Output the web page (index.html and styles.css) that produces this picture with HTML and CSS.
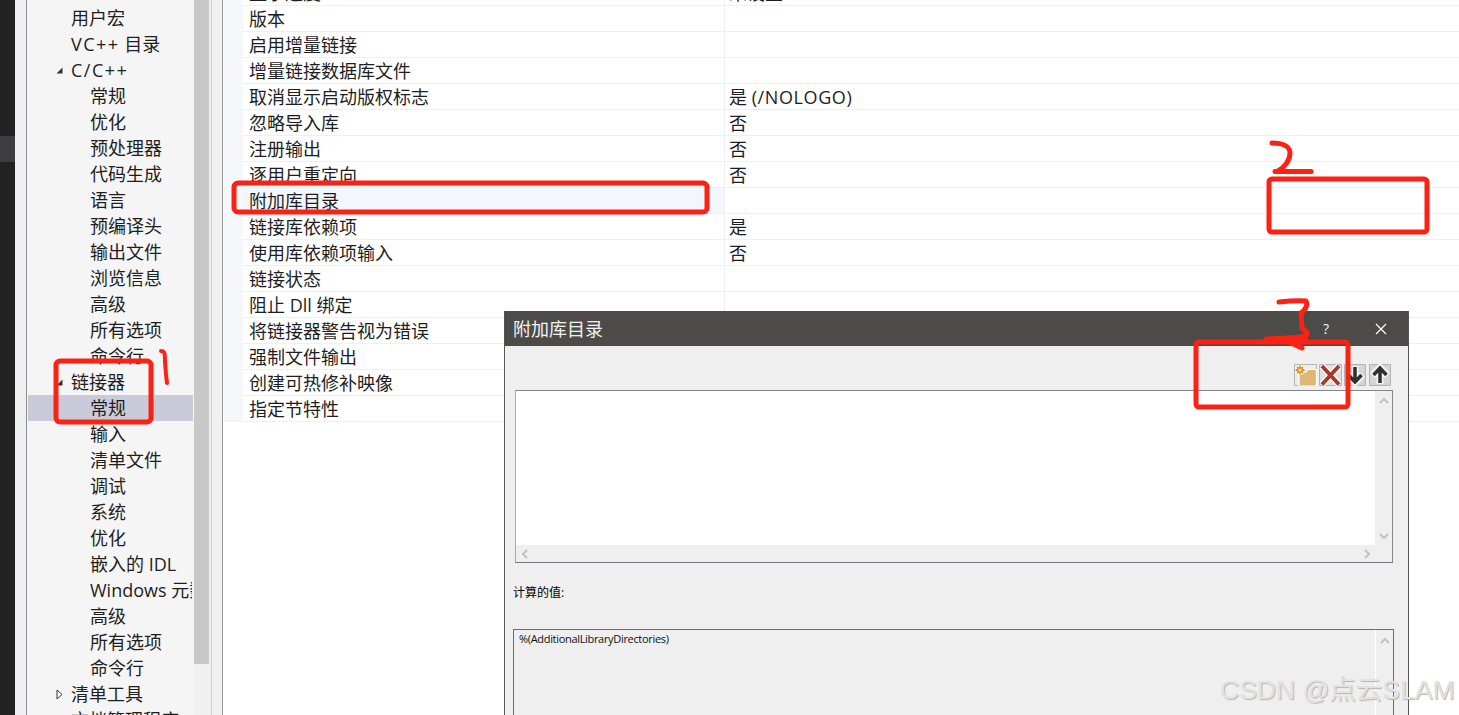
FILE: index.html
```html
<!DOCTYPE html>
<html lang="zh-CN">
<head>
<meta charset="utf-8">
<title>附加库目录</title>
<link rel="stylesheet" href="styles.css">
</head>
<body>
<div class="screen">
  <div class="ide-strip"><div class="ide-strip-active"></div></div>

  <div class="sidebar">
    <nav class="tree">
      <div class="node lvl1"><span class="twist"></span><span class="label">用户宏</span></div>
      <div class="node lvl1"><span class="twist"></span><span class="label"><span class="wide">VC++</span> 目录</span></div>
      <div class="node lvl1"><span class="twist"><svg viewBox="0 0 7 7" width="7" height="7"><path d="M6.5 0.5V6.5H0.5Z" fill="#333"/></svg></span><span class="label wide">C/C++</span></div>
      <div class="node lvl2"><span class="label">常规</span></div>
      <div class="node lvl2"><span class="label">优化</span></div>
      <div class="node lvl2"><span class="label">预处理器</span></div>
      <div class="node lvl2"><span class="label">代码生成</span></div>
      <div class="node lvl2"><span class="label">语言</span></div>
      <div class="node lvl2"><span class="label">预编译头</span></div>
      <div class="node lvl2"><span class="label">输出文件</span></div>
      <div class="node lvl2"><span class="label">浏览信息</span></div>
      <div class="node lvl2"><span class="label">高级</span></div>
      <div class="node lvl2"><span class="label">所有选项</span></div>
      <div class="node lvl2"><span class="label">命令行</span></div>
      <div class="node lvl1"><span class="twist"><svg viewBox="0 0 7 7" width="7" height="7"><path d="M6.5 0.5V6.5H0.5Z" fill="#333"/></svg></span><span class="label">链接器</span></div>
      <div class="node lvl2 selected"><span class="label">常规</span></div>
      <div class="node lvl2"><span class="label">输入</span></div>
      <div class="node lvl2"><span class="label">清单文件</span></div>
      <div class="node lvl2"><span class="label">调试</span></div>
      <div class="node lvl2"><span class="label">系统</span></div>
      <div class="node lvl2"><span class="label">优化</span></div>
      <div class="node lvl2"><span class="label">嵌入的 IDL</span></div>
      <div class="node lvl2"><span class="label">Windows 元数据</span></div>
      <div class="node lvl2"><span class="label">高级</span></div>
      <div class="node lvl2"><span class="label">所有选项</span></div>
      <div class="node lvl2"><span class="label">命令行</span></div>
      <div class="node lvl1"><span class="twist"><svg viewBox="0 0 7 11" width="7" height="11"><path d="M1 1L6 5.5L1 10Z" fill="#fff" stroke="#333" stroke-width="1"/></svg></span><span class="label">清单工具</span></div>
      <div class="node lvl1"><span class="twist"></span><span class="label">文档管理程序</span></div>
    </nav>
    <div class="tree-scroll"><div class="tree-thumb"></div></div>
    <div class="splitter"></div>
  </div>

  <main class="props">
    <div class="prop-list">
      <div class="prop"><div class="prop-name">显示进度</div><div class="prop-value">未设置</div></div>
      <div class="prop"><div class="prop-name">版本</div><div class="prop-value"></div></div>
      <div class="prop"><div class="prop-name">启用增量链接</div><div class="prop-value"></div></div>
      <div class="prop"><div class="prop-name">增量链接数据库文件</div><div class="prop-value"></div></div>
      <div class="prop"><div class="prop-name">取消显示启动版权标志</div><div class="prop-value">是 <span class="roomy">(/NOLOGO)</span></div></div>
      <div class="prop"><div class="prop-name">忽略导入库</div><div class="prop-value">否</div></div>
      <div class="prop"><div class="prop-name">注册输出</div><div class="prop-value">否</div></div>
      <div class="prop"><div class="prop-name">逐用户重定向</div><div class="prop-value">否</div></div>
      <div class="prop current"><div class="prop-name">附加库目录</div><div class="prop-value"></div></div>
      <div class="prop"><div class="prop-name">链接库依赖项</div><div class="prop-value">是</div></div>
      <div class="prop"><div class="prop-name">使用库依赖项输入</div><div class="prop-value">否</div></div>
      <div class="prop"><div class="prop-name">链接状态</div><div class="prop-value"></div></div>
      <div class="prop"><div class="prop-name">阻止 Dll 绑定</div><div class="prop-value"></div></div>
      <div class="prop"><div class="prop-name">将链接器警告视为错误</div><div class="prop-value"></div></div>
      <div class="prop"><div class="prop-name">强制文件输出</div><div class="prop-value"></div></div>
      <div class="prop"><div class="prop-name">创建可热修补映像</div><div class="prop-value"></div></div>
      <div class="prop"><div class="prop-name">指定节特性</div><div class="prop-value"></div></div>
    </div>
  </main>
</div>

<section class="dialog">
  <header class="dialog-title">
    <span class="dialog-name">附加库目录</span>
    <span class="dialog-help">?</span>
    <svg class="dialog-close" viewBox="0 0 12 12" width="12" height="12"><path d="M1 1L11 11M11 1L1 11" stroke="#fff" stroke-width="1.2" fill="none"/></svg>
  </header>
  <div class="dialog-body">
    <div class="toolbar">
      <span class="tool">
        <svg viewBox="0 0 23 22" width="23" height="22">
          <path d="M.5 .5H22.500V21.500H.5Z" fill="#ececec" stroke="#b4b4b4"/>
          <path d="M5 8H12L14 5.500H22.500V22H5Z" fill="#e0b673" stroke="#fff" stroke-width="1.200"/>
          <path d="M1 6H11M6 1V11M2.500 2.500L9.500 9.500M9.500 2.500L2.500 9.500" stroke="#fff" stroke-width="3.500"/>
          <path d="M1.500 6H10.500M6 1.500V10.500M3 3L9 9M9 3L3 9" stroke="#da8e22" stroke-width="1.800"/>
          <circle cx="6" cy="6" r="1.600" fill="#f9e0a0"/>
        </svg>
      </span>
      <span class="tool">
        <svg viewBox="0 0 23 22" width="23" height="22">
          <path d="M.5 .5H22.500V21.500H.5Z" fill="#e0e0e0" stroke="#b4b4b4"/>
          <path d="M3 2L20 20.500M20 2L3 20.500" stroke="#fff" stroke-width="6.500"/>
          <path d="M3 2L20 20.500M20 2L3 20.500" stroke="#a43b2c" stroke-width="4"/>
        </svg>
      </span>
      <span class="tool">
        <svg viewBox="0 0 22 22" width="22" height="22">
          <path d="M.5 .5H21.500V21.500H.5Z" fill="#d4d4d4" stroke="#b4b4b4"/>
          <path d="M11 2V18M3.500 10.500L11 18.500L18.500 10.500" stroke="#f4f4f4" stroke-width="7" fill="none"/>
          <path d="M11 3V18M4.500 11L11 18L17.500 11" stroke="#2f2f2f" stroke-width="3.500" fill="none"/>
        </svg>
      </span>
      <span class="tool">
        <svg viewBox="0 0 22 22" width="22" height="22">
          <path d="M.5 .5H21.500V21.500H.5Z" fill="#d4d4d4" stroke="#b4b4b4"/>
          <path d="M11 20V4M3.500 11.500L11 3.500L18.500 11.500" stroke="#f4f4f4" stroke-width="7" fill="none"/>
          <path d="M11 19V4M4.500 11L11 4L17.500 11" stroke="#2f2f2f" stroke-width="3.500" fill="none"/>
        </svg>
      </span>
    </div>
    <div class="listbox">
      <div class="list-area"></div>
      <div class="vbar">
        <svg viewBox="0 0 10 6" width="10" height="6"><path d="M1 5L5 1L9 5" stroke="#c2c2c2" stroke-width="2" fill="none"/></svg>
        <svg viewBox="0 0 10 6" width="10" height="6"><path d="M1 1L5 5L9 1" stroke="#c2c2c2" stroke-width="2" fill="none"/></svg>
      </div>
      <div class="hbar">
        <svg viewBox="0 0 6 10" width="6" height="10"><path d="M5 1L1 5L5 9" stroke="#c2c2c2" stroke-width="2" fill="none"/></svg>
        <svg viewBox="0 0 6 10" width="6" height="10"><path d="M1 1L5 5L1 9" stroke="#c2c2c2" stroke-width="2" fill="none"/></svg>
      </div>
      <div class="corner"></div>
    </div>
    <div class="computed-label">计算的值:</div>
    <div class="computed">
      <div class="computed-text">%(AdditionalLibraryDirectories)</div>
      <div class="computed-bar">
        <svg viewBox="0 0 10 6" width="10" height="6"><path d="M1 5L5 1L9 5" stroke="#c2c2c2" stroke-width="2" fill="none"/></svg>
      </div>
    </div>
  </div>
</section>

<svg class="ink" viewBox="0 0 1459 715" width="1459" height="715">
  <g fill="none" stroke="#fb2214" stroke-linecap="round" stroke-linejoin="round">
    <rect x="56" y="361" width="95" height="61" rx="4" stroke-width="5"/>
    <rect x="234" y="183" width="473" height="29" rx="4" stroke-width="5"/>
    <rect x="1269" y="179" width="158" height="53" rx="3" stroke-width="5"/>
    <rect x="1196" y="342" width="152" height="65" rx="3" stroke-width="5"/>
    <path d="M161 351C165 351 165 354 165 362L166 374L167 383" stroke-width="4"/>
    <path d="M1272 143C1282 143 1290 146 1290 153C1290 160 1285 167 1278 171M1275 171.500H1311" stroke-width="5"/>
    <path d="M1279 302C1288 301 1298 300 1306 301C1308 305 1306 309 1301 313L1302 328C1306 331 1309 333 1306 336C1295 339 1280 338 1266 339" stroke-width="5"/>
    <path d="M1291 343L1302 348M1290 342L1306 340" stroke-width="5"/>
  </g>
</svg>

<div class="watermark">CSDN @点云SLAM</div>
</body>
</html>
```
FILE: styles.css
```css
* {
  box-sizing: border-box;
}

html,
body {
  margin: 0;
  height: 715px;
  overflow: hidden;
  background: #fff;
}

body {
  position: relative;
  font-family: "Open Sans", "Noto Sans CJK SC", sans-serif;
  font-size: 18px;
  line-height: 26px;
  color: #1e1e1e;
}

.screen {
  display: flex;
  height: 715px;
  overflow: hidden;
}

.wide {
  letter-spacing: 1.5px;
}

.roomy {
  letter-spacing: 0.6px;
}

/* Dark IDE edge */
.ide-strip {
  flex: 0 0 15px;
  background: #222222;
  padding-top: 136px;
}

.ide-strip-active {
  height: 26px;
  background: #3d3d3f;
}

/* Category tree */
.sidebar {
  flex: 0 0 207px;
  display: flex;
  padding-left: 11px;
  background: #f0f0f0;
}

.tree {
  flex: 0 0 168px;
  height: 740px;
  padding-top: 5px;
  border-left: 1px solid #8d8d94;
  background: #f5f5f5;
  overflow: hidden;
}

.node {
  display: flex;
  align-items: center;
  width: 165px;
  height: 26px;
  white-space: nowrap;
  overflow: hidden;
}

.lvl1 {
  padding-left: 29px;
}

.lvl2 {
  padding-left: 63px;
}

.twist {
  flex: 0 0 15px;
  display: flex;
  align-items: center;
}

.selected {
  background: #cacbd9;
  margin-left: 1px;
  padding-left: 62px;
}

.tree-scroll {
  flex: 0 0 15px;
  background: #f0f0f0;
}

.tree-thumb {
  height: 664px;
  background: #c8c8c8;
}

.splitter {
  flex: 0 0 1px;
  margin-left: 2px;
  background: #cfcfcf;
}

/* Property grid */
.props {
  flex: 1;
  border-left: 1px solid #9a9a9a;
  background: #fff;
  overflow: hidden;
}

.prop-list {
  margin-top: -20px;
  padding-left: 20px;
  background: #f5f7fb;
}

.prop {
  display: flex;
  height: 26px;
  background: #fff;
  border-bottom: 1px solid #f0f0f0;
}

.prop-name {
  flex: 0 0 482px;
  padding-left: 6px;
  border-right: 1px solid #f0f0f0;
  white-space: nowrap;
}

.prop-value {
  flex: 1;
  padding-left: 4px;
}

.current .prop-name {
  background: #f3f6fc;
}

/* Modal dialog */
.dialog {
  position: absolute;
  left: 504px;
  top: 311px;
  width: 905px;
  height: 420px;
  border: 1px solid #555;
  border-top: 0;
  background: #efefef;
}

.dialog-title {
  display: flex;
  align-items: center;
  height: 35px;
  padding-left: 8px;
  background: #4d4b48;
  color: #f2f2f2;
}

.dialog-name {
  flex: 1;
}

.dialog-help {
  font-size: 14px;
  margin-right: 46px;
}

.dialog-close {
  margin-right: 21px;
}

.dialog-body {
  padding: 18px 14px 0 8px;
}

.toolbar {
  display: flex;
  justify-content: flex-end;
  gap: 2px;
  height: 22px;
  margin-right: 3px;
}

.tool {
  display: block;
  height: 22px;
}

.tool:nth-child(3) {
  margin-right: 1px;
}

.listbox {
  display: grid;
  grid-template-columns: 1fr 17px;
  grid-template-rows: 1fr 17px;
  width: 878px;
  height: 173px;
  margin: 4px 0 0 2px;
  border: 1px solid #a8a8a8;
  border-top-color: #82868c;
  border-right-color: #82868c;
  border-bottom-color: #74777c;
}

.list-area {
  background: #fff;
}

.vbar {
  display: flex;
  flex-direction: column;
  justify-content: space-between;
  align-items: center;
  padding: 7px 0 6px;
}

.hbar {
  display: flex;
  justify-content: space-between;
  align-items: center;
  padding: 0 5px 0 6px;
}

.computed-label {
  margin-top: 21px;
  font-size: 12px;
  line-height: 18px;
  color: #000;
}

.computed {
  display: flex;
  width: 881px;
  height: 100px;
  margin-top: 27px;
  border: 1px solid #6e6e6e;
  border-bottom: 0;
}

.computed-text {
  flex: 1;
  padding: 1px 0 0 5px;
  font-size: 11px;
  line-height: 16px;
  letter-spacing: -0.32px;
  color: #111;
}

.computed-bar {
  flex: 0 0 18px;
  display: flex;
  justify-content: center;
  padding-top: 8px;
  border-left: 1px solid #fff;
}

/* Hand-drawn annotations */
.ink {
  position: absolute;
  left: 0;
  top: 0;
  pointer-events: none;
}

.watermark {
  position: absolute;
  left: 1220px;
  top: 672px;
  font-family: "Liberation Sans", "Noto Sans CJK SC", sans-serif;
  font-size: 26.5px;
  line-height: 36px;
  white-space: nowrap;
  color: #e2e2e2;
  text-shadow: 1px 1px 1px #b4b4b4;
}
```
